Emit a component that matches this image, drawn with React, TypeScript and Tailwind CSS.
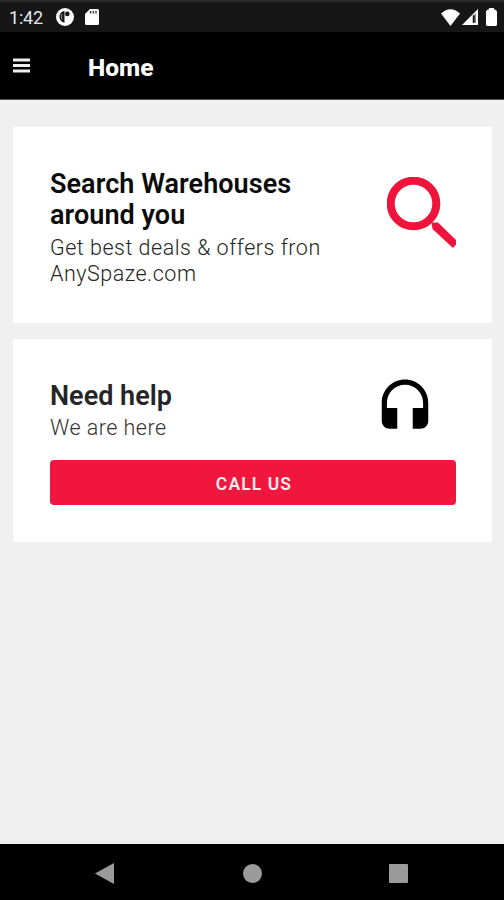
import React from 'react';

const StatusBar: React.FC = () => (
  <div className="flex h-8 items-center justify-between border-t-2 border-[#2b2b2b] bg-[#161616] pl-[9px] pr-[7px] text-white">
    <div className="flex items-center">
      <span className="w-[47px] pt-px text-[18px] leading-none tracking-[-0.2px] text-[#e8e8e8]">1:42</span>
      <svg className="h-[18px] w-[18px]" viewBox="0 0 18 18">
        <circle cx="9" cy="9" r="9" fill="#fff" />
        <path d="M8.500 3C5 3.500 3.500 6 3.500 9c0 3 1.800 5.300 5 5.800z" fill="#161616" />
        <path d="M5.700 6v5.500" stroke="#bbb" strokeWidth="0.800" />
        <circle cx="11.300" cy="5.900" r="2.300" fill="#161616" />
      </svg>
      <svg className="ml-[11px] h-4 w-[14px]" viewBox="0 0 14 16">
        <path d="M5 0h7.500Q14 0 14 1.500v13q0 1.500-1.500 1.500h-11Q0 16 0 14.500V5z" fill="#fff" />
        <path d="M5.500 2v2.600M8.300 2v2.600M11 2v2.600" stroke="#444" strokeWidth="1.500" />
      </svg>
    </div>
    <div className="flex items-center">
      <svg className="h-[17px] w-[19px]" viewBox="0 0 19 17">
        <path d="M0 4.500Q9.500-4 19 4.500L9.500 17z" fill="#fff" />
      </svg>
      <svg className="ml-[2px] h-4 w-4" viewBox="0 0 16 16">
        <path d="M16 0v16H0z" fill="#fff" />
        <path d="M10.500 6.500v7.500h3.500V4.500z" fill="#888" />
        <path d="M11.800 6.500v7" stroke="#161616" strokeWidth="1.600" />
      </svg>
      <svg className="ml-2 h-[18px] w-[11px]" viewBox="0 0 11 18">
        <path d="M3 0h5v1.500h1Q11 2 11 4v12.500Q11 18 9.500 18h-8Q0 18 0 16.500V4q0-2 2-2.500h1z" fill="#fff" />
      </svg>
    </div>
  </div>
);

const Header: React.FC = () => (
  <header className="flex h-[68px] items-center border-b border-[#555] bg-black pl-[13px] text-white">
    <svg className="h-[15px] w-[17px]" viewBox="0 0 17 15">
      <path d="M0 2h17M0 7.500h17M0 13h17" stroke="#eee" strokeWidth="3" />
    </svg>
    <h1 className="ml-[58px] mt-[5px] text-[24.500px] font-extrabold leading-none">Home</h1>
  </header>
);

const NavBar: React.FC = () => (
  <nav className="flex h-14 items-center bg-black pl-[95px] pt-[2px]">
    <svg className="h-[21px] w-[19px]" viewBox="0 0 19 21">
      <path d="M19 0v21L0 10.500z" fill="#9b9b9b" />
    </svg>
    <div className="ml-[129px] h-[19px] w-[19px] rounded-full bg-[#9b9b9b]" />
    <div className="ml-[127px] h-[19px] w-[19px] rounded-[1px] bg-[#9b9b9b]" />
  </nav>
);

const App: React.FC = () => {
  return (
    <div className="flex h-[900px] w-[504px] flex-col overflow-hidden bg-[#f0f0f0] font-['Roboto',sans-serif]">
      <StatusBar />
      <Header />

      <main className="flex-1 pl-[13px] pr-3 pt-[27px]">
        {/* Search card */}
        <section className="flex h-[196px] justify-between bg-white pl-[37px] pr-9 pt-[42px]">
          <div>
            <h2 className="text-[27px] font-semibold leading-[31px] tracking-[0.05px] text-[#0b0b0b]">
              Search Warehouses
              <br />
              around you
            </h2>
            <p className="mt-[4px] whitespace-nowrap text-[21.500px] font-light leading-[26px] tracking-[0.500px] text-[#252525]">
              Get best deals &amp; offers fron
              <br />
              AnySpaze.com
            </p>
          </div>
          <svg className="mt-[8px] h-[71px] w-[69px]" viewBox="0 0 69 71" fill="none">
            <circle cx="26.500" cy="26.500" r="22.800" stroke="#ef143c" strokeWidth="8" />
            <path d="M44.500 45.500h6.500L69 63v4.500L66 71 45.500 52z" fill="#ef143c" />
          </svg>
        </section>

        {/* Help card */}
        <section className="mt-4 h-[203px] bg-white pl-[37px] pr-9 pt-[38px]">
          <div className="flex h-[83px] justify-between">
            <div className="pt-[4px]">
              <h2 className="text-[27px] font-semibold leading-[31px] text-[#252525]">Need help</h2>
              <p className="mt-[3px] text-[21.500px] font-light leading-[26px] tracking-[0.470px] text-[#333]">
                We are here
              </p>
            </div>
            <svg className="mr-[20px] h-[62px] w-[62px]" viewBox="0 0 24 24">
              <path d="M12 1c-4.970 0-9 4.030-9 9v7c0 1.660 1.340 3 3 3h3v-8H5v-2c0-3.870 3.130-7 7-7s7 3.130 7 7v2h-4v8h3c1.660 0 3-1.340 3-3v-7c0-4.970-4.030-9-9-9z" />
            </svg>
          </div>
          <button className="h-[45px] w-full rounded-[4px] bg-[#f0163e] pl-[2px] pt-[3px] text-[17.500px] font-semibold tracking-[1.100px] text-[#ffe9ec]">
            CALL US
          </button>
        </section>
      </main>

      <NavBar />
    </div>
  );
};

export default App;
